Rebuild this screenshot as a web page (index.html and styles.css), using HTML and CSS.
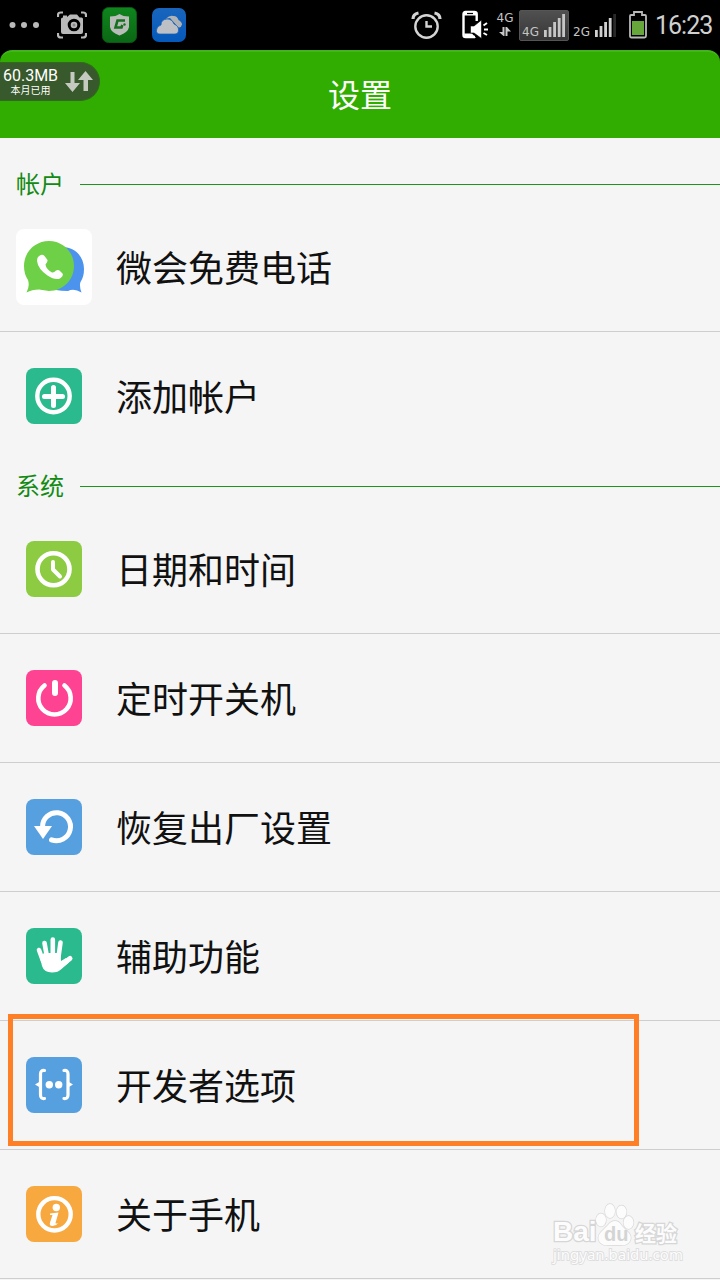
FILE: index.html
```html
<!DOCTYPE html>
<html lang="zh-CN">
<head>
    <meta charset="UTF-8">
    <meta name="viewport" content="width=device-width, initial-scale=1.0">
    <title>设置</title>
    <link rel="stylesheet" href="styles.css">
</head>
<body>
    <div class="screen">
        <div class="status-bar">
            <div class="status-left">
                <svg class="dots" width="30" height="8" viewBox="0 0 30 8" fill="#b9b9b9">
                    <circle cx="3.5" cy="4" r="3"/><circle cx="15" cy="4" r="3"/><circle cx="27" cy="4" r="3"/>
                </svg>
                <svg width="30" height="28" viewBox="0 0 30 28">
                    <g fill="none" stroke="#b9b9b9" stroke-width="2.2">
                        <path d="M1 6V4Q1 1.500 4 1.500H6M24 1.500H26Q29 1.500 29 4V6M1 22V24Q1 26.500 4 26.500H6M24 26.500H26Q29 26.500 29 24V22"/>
                    </g>
                    <path fill="#b9b9b9" d="M6 6.500V4.500H10V6L13 3.500H20L22.500 6.500H24.500Q26 6.500 26 8V21Q26 23 24 23H6Q4 23 4 21V8Q4 6.500 6 6.500Z"/>
                    <circle cx="17" cy="14" r="4.800" fill="#b9b9b9" stroke="#000" stroke-width="3"/>
                    <circle cx="17" cy="14" r="1.500" fill="#888"/>
                </svg>
                <svg width="35" height="36" viewBox="0 0 35 36">
                    <defs>
                        <linearGradient id="guard" x1="0" y1="0" x2="0" y2="1">
                            <stop offset="0" stop-color="#0f851d"/><stop offset="1" stop-color="#0b6714"/>
                        </linearGradient>
                    </defs>
                    <rect x=".5" y=".5" width="34" height="35" rx="6" fill="url(#guard)" stroke="#075a10"/>
                    <path fill="#b9bdb9" d="M17.500 7Q21 9.500 27 9.500V20Q26 25.500 17.500 28.500Q9 25.500 8 20V9.500Q14 9.500 17.500 7Z"/>
                    <path fill="none" stroke="#14701c" stroke-width="2.600" d="M23 13.500H15.500L13.500 20.500H19.500L20.300 18"/>
                    <circle cx="22.500" cy="17.500" r="1.200" fill="#14701c"/>
                </svg>
                <svg width="34" height="34" viewBox="0 0 34 34">
                    <defs>
                        <linearGradient id="cloud" x1="0" y1="0" x2="0" y2="1">
                            <stop offset="0" stop-color="#1965bd"/><stop offset="1" stop-color="#0459ba"/>
                        </linearGradient>
                    </defs>
                    <rect width="34" height="34" rx="7" fill="url(#cloud)"/>
                    <path fill="#b0b3b5" d="M13.500 11Q18 7 21 8Q25 7.500 26.500 12Q30 14 30 16.500Q29 20 26.500 19.500L18 10Z"/>
                    <path fill="#bdc1c5" stroke="#1560b6" stroke-width=".7" d="M8 26Q4 26 4.500 22Q5 18 9 17Q9 11.500 15 11Q20 11 22 16Q27 18 26.500 23Q26 26 23 26Z"/>
                </svg>
            </div>
            <div class="status-right">
                <svg width="31" height="29" viewBox="0 0 31 29">
                    <g fill="none" stroke="#d4d4d4" stroke-width="2.400">
                        <circle cx="15.500" cy="15.500" r="11.200"/>
                        <path d="M15.500 10V15.500H21"/>
                        <path stroke-width="3.200" d="M2 8Q2 3 7.500 2M29 8Q29 3 23.500 2"/>
                    </g>
                </svg>
                <svg class="phone" width="28" height="30" viewBox="0 0 28 30">
                    <path fill="none" stroke="#fff" stroke-width="2.400" d="M14.700 11V4Q14.700 2 12.500 2H3.500Q1.500 2 1.500 4V25Q1.500 27 3.500 27H13"/>
                    <path fill="#fff" d="M2 1.500H14V5.500H2ZM2 23.500H10L14 28H3Z"/>
                    <path stroke="#000" stroke-width="1.200" d="M5 3.500H11"/>
                    <path fill="#fff" stroke="#000" stroke-width=".6" d="M8.500 16H12L19.500 10V28.500L12 23H8.500Z"/>
                    <path stroke="#fff" stroke-width="2" d="M21.500 15.500L25 13M22 19.500H26M21.500 23L25 25"/>
                </svg>
                <div class="data-type">
                    <span class="net">4G</span>
                    <svg width="12" height="10" viewBox="0 0 12 10" fill="#c8c8c8">
                        <path d="M3.500 0H5.500V9H4.500L0 5H3.500ZM6.500 9V0H8L12 4.500H8.500V9Z"/>
                    </svg>
                </div>
                <div class="signal signal-active">
                    <span class="net">4G</span>
                    <svg width="21" height="25" viewBox="0 0 21 25" fill="#c6c6c6">
                        <path d="M0 18H2.800V25H0ZM4.600 15H7.400V25H4.600ZM9.200 10H12V25H9.200ZM13.800 6H16.600V25H13.800ZM18.200 2H21V25H18.200Z"/>
                    </svg>
                </div>
                <div class="signal signal-second">
                    <span class="net">2G</span>
                    <svg width="21" height="25" viewBox="0 0 21 25" fill="#d0d0d0">
                        <path d="M0 18H2.800V25H0ZM4.600 14H7.400V25H4.600ZM9.200 10H12V25H9.200ZM13.800 6H16.600V25H13.800Z"/>
                        <path fill="#292929" d="M18.200 2H21V25H18.200Z"/>
                    </svg>
                </div>
                <svg class="battery" width="18" height="28" viewBox="0 0 18 28">
                    <path fill="none" stroke="#b9b9b9" stroke-width="1.800" d="M1 5Q1 4 2 4H5V1H13V4H16Q17 4 17 5V25Q17 26.500 15.500 26.500H2.500Q1 26.500 1 25Z"/>
                    <rect x="3" y="10" width="12" height="14" fill="#67a63a"/>
                </svg>
                <span class="clock">16:23</span>
            </div>
        </div>

        <header class="title-bar">
            <h1>设置</h1>
        </header>

        <main>
            <h2 class="section"><span>帐户</span></h2>
            <ul class="list">
                <li class="row">
                    <span class="icon-cell">
                        <svg width="76" height="76" viewBox="0 0 76 76">
                            <rect width="76" height="76" rx="8" fill="#fff"/>
                            <path fill="#4c93ee" d="M45 18C58 17 68 27 68 40Q68 48 64.500 53Q63 57 65.500 63.500Q58 59 52 62Q45 62 40 61Z"/>
                            <path fill="#6ed046" d="M33 12C47 12 58 23 58 37S47 62 33 62L23 60.500Q16 60.500 10.500 63.500Q14 57 12 51Q8 45 8 37C8 23 19 12 33 12Z"/>
                            <path fill="#fff" d="M22 28Q26 24 28.500 27L31.500 31Q32 32.500 29.500 35.500Q30 40 36 43.500Q38 44 40 41.500Q42 40.500 43.500 41.500L46.500 44.500Q48 47 44 49.500Q39 51.500 31.500 46.500Q22 40 21 32Q21 29.500 22 28Z"/>
                        </svg>
                    </span>
                    <span class="label">微会免费电话</span>
                </li>
                <li class="row">
                    <span class="icon-cell">
                        <svg class="icon teal" viewBox="0 0 56 56">
                            <circle cx="27.500" cy="28" r="16.200" stroke-width="4.400"/>
                            <path stroke-width="5" d="M18.500 28.500H36.500M27.500 19.500V37.500"/>
                        </svg>
                    </span>
                    <span class="label">添加帐户</span>
                </li>
            </ul>

            <h2 class="section section-system"><span>系统</span></h2>
            <ul class="list">
                <li class="row">
                    <span class="icon-cell">
                        <svg class="icon lime" viewBox="0 0 56 56">
                            <circle cx="27.500" cy="28.300" r="16" stroke-width="4.600"/>
                            <path stroke-width="4" d="M27 21V28.500L34 35.500"/>
                        </svg>
                    </span>
                    <span class="label">日期和时间</span>
                </li>
                <li class="row">
                    <span class="icon-cell">
                        <svg class="icon pink" viewBox="0 0 56 56">
                            <path stroke-width="4.600" d="M18.500 15.500A16.200 16.200 0 1 0 38.500 15.500"/>
                            <path stroke-width="6" d="M29 13V23"/>
                        </svg>
                    </span>
                    <span class="label">定时开关机</span>
                </li>
                <li class="row">
                    <span class="icon-cell">
                        <svg class="icon blue" viewBox="0 0 56 56">
                            <path stroke-width="5" d="M16.500 28A14 14 0 1 1 25.500 40.800"/>
                            <path fill="#fff" stroke="none" d="M8 27H26L17 40Z"/>
                        </svg>
                    </span>
                    <span class="label">恢复出厂设置</span>
                </li>
                <li class="row">
                    <span class="icon-cell">
                        <svg class="icon teal" viewBox="0 0 56 56">
                            <path stroke-width="4.600" d="M13 22L17 33M18.500 15L21 29M26.800 11.500V28M34.500 14.500L32.500 29"/>
                            <path stroke-width="5" d="M44 30.500L35.500 37"/>
                            <path fill="#fff" stroke="none" d="M14 29L18 25H34.500L35 33L40 30L43 34.500L35.500 41Q32 44.500 26 44.500Q18 44.500 16 38Z"/>
                        </svg>
                    </span>
                    <span class="label">辅助功能</span>
                </li>
                <li class="row">
                    <span class="icon-cell">
                        <svg class="icon blue" viewBox="0 0 56 56">
                            <path stroke-width="3.200" d="M18.500 13.500Q14.500 13 14.500 17V38Q14.500 42 18.500 41.500M38 13.500Q42 13 42 17V38Q42 42 38 41.500"/>
                            <path fill="#fff" stroke="none" d="M9 27.500L14 24.500V30.500ZM47 27.500L42 24.500V30.500Z"/>
                            <circle cx="23.300" cy="27.700" r="3.700" fill="#fff" stroke="none"/>
                            <circle cx="32.700" cy="27.700" r="3.700" fill="#fff" stroke="none"/>
                        </svg>
                    </span>
                    <span class="label">开发者选项</span>
                </li>
                <li class="row">
                    <span class="icon-cell">
                        <svg class="icon orange" viewBox="0 0 56 56">
                            <circle cx="28.500" cy="28.300" r="16.200" stroke-width="4.400"/>
                            <circle cx="30.300" cy="21.500" r="3.700" fill="#fff" stroke="none"/>
                            <path fill="#fff" stroke="none" d="M24 27.500L32.500 26.500L29.500 37Q30 38 32.500 37Q30 40 26.500 40Q23 40 24 36.500L26.500 29H24Z"/>
                        </svg>
                    </span>
                    <span class="label">关于手机</span>
                </li>
            </ul>
        </main>

        <div class="traffic">
            <div class="traffic-text">
                <span class="traffic-amount">60.3MB</span>
                <span class="traffic-note">本月已用</span>
            </div>
            <svg width="28" height="22" viewBox="0 0 28 22" fill="#c5cac1">
                <path d="M5.500 1H9.500V12H15L7.500 21L0 12H5.500ZM20.500 0L28 9H23V20H18.500V9H13Z"/>
            </svg>
        </div>

        <div class="highlight"></div>

        <div class="watermark">
            <div class="brand">
                <span class="bai">Bai</span>
                <span class="paw">
                    <svg width="40" height="43" viewBox="0 0 40 43" fill="#fcfcfc" stroke="#d8d8d8" stroke-width="1.300">
                        <ellipse cx="6" cy="17" rx="5" ry="6.500"/>
                        <ellipse cx="15" cy="8" rx="5" ry="7"/>
                        <ellipse cx="26.500" cy="9" rx="5" ry="6.500"/>
                        <ellipse cx="33.500" cy="19.500" rx="5" ry="6.500"/>
                        <path d="M20 18Q24 18 27 23L34 30Q37 34 35 38Q32 43 26 42H13Q7 43 4 38Q2 33 6 29L13 22Q16 18 20 18Z"/>
                    </svg>
                    <span class="du">du</span>
                </span>
                <span class="jingyan">经验</span>
            </div>
            <div class="site">jingyan.baidu.com</div>
        </div>
    </div>
</body>
</html>
```
FILE: styles.css
```css
* {
    box-sizing: border-box;
}

body {
    margin: 0;
    background: #000;
    font-family: Roboto, "Noto Sans CJK SC", sans-serif;
    color: #111;
}

svg {
    display: block;
    flex-shrink: 0;
}

.screen {
    position: relative;
    width: 720px;
    height: 1280px;
    overflow: hidden;
}

/* status bar */
.status-bar {
    display: flex;
    justify-content: space-between;
    height: 50px;
    padding: 0 7px 0 9px;
}

.status-left,
.status-right {
    display: flex;
    align-items: center;
}

.status-left {
    gap: 15px;
}

.dots {
    margin-right: 3px;
}

.phone {
    margin-left: 20px;
}

.data-type {
    display: flex;
    flex-direction: column;
    align-items: center;
    gap: 3px;
    width: 18px;
    margin: 0 5px 0 6px;
}

.net {
    font-family: "DejaVu Sans", sans-serif;
    font-size: 12px;
    line-height: 11px;
    color: #c4c4c4;
}

.signal {
    display: flex;
    align-items: flex-end;
    justify-content: space-between;
    height: 31px;
    padding: 0 4px 4px 3px;
}

.signal .net {
    line-height: 9px;
}

.signal-active {
    width: 50px;
    border: 1px solid #555;
    border-radius: 2px;
    background: linear-gradient(#505050, #373737);
    padding: 0 3px 3px 2px;
}

.signal-second {
    width: 46px;
    margin-left: 4px;
    padding: 0 3px 4px 0;
}

.battery {
    margin-left: 10px;
}

.clock {
    width: 58px;
    margin-left: 8px;
    padding-top: 2px;
    font-size: 25px;
    line-height: 30px;
    letter-spacing: -1px;
    white-space: nowrap;
    color: #d0d0d0;
}

/* title */
.title-bar {
    display: flex;
    align-items: center;
    justify-content: center;
    height: 88px;
    border-top: 2px solid #42b51d;
    border-radius: 12px 12px 0 0;
    background: #30ad00;
}

h1 {
    margin: 0;
    padding-top: 1px;
    font-size: 32px;
    line-height: 40px;
    font-weight: 400;
    color: #fff;
}

/* settings list */
main {
    height: 1142px;
    padding-top: 27px;
    background: #f5f5f5;
}

.section {
    display: flex;
    align-items: center;
    gap: 16px;
    height: 38px;
    margin: 0;
    padding-left: 16px;
    font-size: 24px;
    line-height: 36px;
    font-weight: 400;
    color: #138a13;
}

.section span {
    padding-top: 2px;
}

.section::after {
    content: "";
    flex: 1;
    height: 1px;
    background: #1c951c;
}

.section-system {
    margin-top: 7px;
}

.list {
    margin: 0;
    padding: 0;
    list-style: none;
}

.row {
    display: flex;
    align-items: center;
    gap: 24px;
    height: 129px;
    padding-left: 16px;
    border-bottom: 1px solid #cecece;
}

.list:first-of-type .row:last-child {
    height: 128px;
    border-bottom: 0;
}

.icon-cell {
    display: flex;
    justify-content: center;
    width: 76px;
}

.icon {
    width: 56px;
    height: 56px;
    border-radius: 8px;
    fill: none;
    stroke: #fff;
    stroke-linecap: round;
    stroke-linejoin: round;
}

.teal {
    background: #2aba8e;
}

.lime {
    background: #8dcc42;
}

.pink {
    background: #fe4393;
}

.blue {
    background: #56a0e0;
}

.orange {
    background: #f7a83f;
}

.label {
    padding-top: 5px;
    font-size: 36px;
    line-height: 48px;
}

/* floating traffic counter */
.traffic {
    position: absolute;
    left: 0;
    top: 62px;
    display: flex;
    align-items: center;
    gap: 7px;
    width: 100px;
    height: 39px;
    padding-left: 3px;
    border: solid #306b1c;
    border-width: 1px 1px 1px 0;
    border-radius: 0 20px 20px 0;
    background: #38592b;
    color: #fff;
}

.traffic-text {
    display: flex;
    flex-direction: column;
    align-items: center;
    width: 55px;
}

.traffic-amount {
    font-size: 16px;
    line-height: 17px;
    white-space: nowrap;
}

.traffic-note {
    font-size: 10px;
    line-height: 13px;
}

/* frame round the developer options row */
.highlight {
    position: absolute;
    left: 8px;
    top: 1014px;
    width: 631px;
    height: 132px;
    border: 5px solid #ff7f27;
}

.watermark {
    position: absolute;
    left: 553px;
    top: 1202px;
    width: 130px;
    color: #fcfcfc;
    font-family: "Liberation Sans", "Noto Sans CJK SC", sans-serif;
    -webkit-text-stroke: 2.5px #d6d6d6;
    paint-order: stroke fill;
}

.brand {
    display: flex;
    align-items: flex-end;
    height: 44px;
}

.bai {
    width: 42px;
    font-size: 28px;
    line-height: 28px;
    font-weight: bold;
}

.paw {
    position: relative;
    width: 40px;
    margin-right: 0;
}

.du {
    position: absolute;
    left: 9px;
    top: 20px;
    font-size: 20px;
    line-height: 22px;
    font-weight: bold;
    color: #d4d4d4;
    -webkit-text-stroke-width: 0;
}

.jingyan {
    font-size: 21px;
    line-height: 25px;
    font-weight: bold;
}

.site {
    font-family: "Noto Sans", sans-serif;
    font-size: 15px;
    line-height: 16px;
    -webkit-text-stroke-width: 1.8px;
    -webkit-text-stroke-color: #dedede;
    white-space: nowrap;
}
```
